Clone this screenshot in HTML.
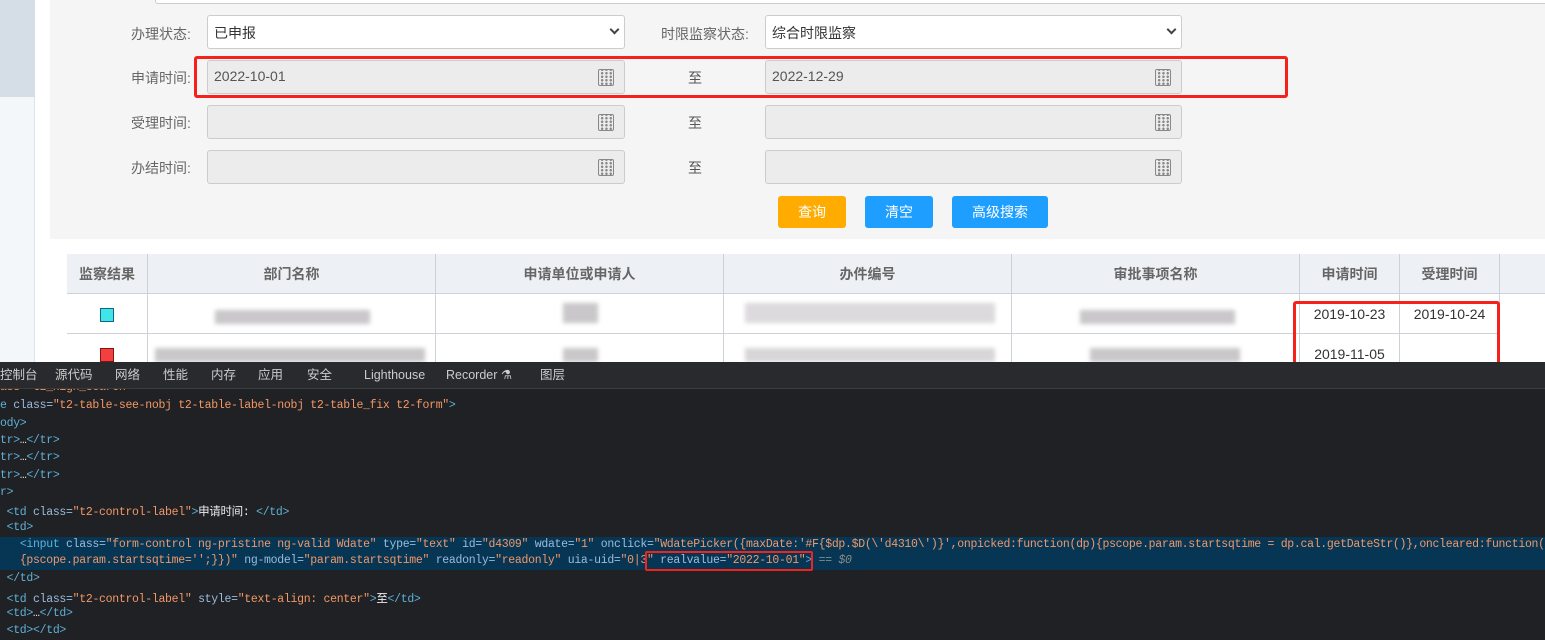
<!DOCTYPE html>
<html><head><meta charset="utf-8"><style>
*{box-sizing:border-box;margin:0;padding:0}
body{width:1545px;height:640px;overflow:hidden;background:#fff;font-family:"Liberation Sans","Noto Sans CJK SC",sans-serif;position:relative}
.a{position:absolute}
.lbl{position:absolute;font-size:14px;color:#666;}
.inp{position:absolute;height:34px;border:1px solid #ccc;border-radius:3px;background:#ececec;font-size:14px;color:#555;padding:7px 6px;}
.sel{background:#fff;}
.cal{position:absolute;right:10px;top:8px;width:16px;height:17px;border:1.5px solid #888;border-radius:2px;background:
radial-gradient(circle,#888 1.2px,transparent 1.3px) 1px 5px/4.3px 3.5px}
.chev{position:absolute;right:6px;top:10px;width:7px;height:7px;border-right:2px solid #444;border-bottom:2px solid #444;transform:rotate(45deg)}
.btn{position:absolute;top:196px;height:32px;border-radius:3px;color:#fff;font-size:14px;text-align:center;line-height:32px}
.th,.td{position:absolute;border-right:1px solid #ccd2d8;border-bottom:1px solid #ccd2d8;font-size:14px;text-align:center}
.th{background:#edf1f5;color:#666;font-weight:bold;line-height:40px;height:40px;top:254px}
.td{color:#333;line-height:40px;height:40px;background:#fff}
.blur{position:absolute;background:#c9c7c9;filter:blur(2px);}
.code{position:absolute;left:0;font-family:"Liberation Mono","Noto Sans CJK SC",monospace;font-size:11.5px;color:#9bbbdc;white-space:pre;letter-spacing:-0.3px}
.t{color:#5db0d7}.v{color:#f29766}.w{color:#e8eaed}
.tab{position:absolute;top:0;line-height:27px;font-size:12.5px;color:#ccc}
</style></head><body>
<div class="a" style="left:0;top:0;width:35px;height:97px;background:#d5dee7"></div>
<div class="a" style="left:0;top:97px;width:35px;height:270px;background:#f3f7fa;border-right:1px solid #dde5ec"></div>
<div class="a" style="left:50px;top:0;width:1495px;height:239px;background:#f5f5f5"></div>
<div class="a" style="left:155px;top:-30px;width:1395px;height:34px;background:#fff;border:1px solid #ccc;border-radius:3px"></div>

<div class="lbl" style="left:131px;top:24px">办理状态:</div>
<div class="inp sel" style="left:207px;top:15px;width:418px;color:#333">已申报<span class="chev"></span></div>
<div class="lbl" style="left:661px;top:24px">时限监察状态:</div>
<div class="inp sel" style="left:765px;top:15px;width:417px;color:#333">综合时限监察<span class="chev"></span></div>

<div class="lbl" style="left:131px;top:68px">申请时间:</div>
<div class="inp" style="left:207px;top:60px;width:418px">2022-10-01<span class="cal"></span></div>
<div class="lbl" style="left:688px;top:68px;color:#555">至</div>
<div class="inp" style="left:765px;top:60px;width:417px">2022-12-29<span class="cal"></span></div>
<div class="a" style="left:194px;top:56px;width:1094px;height:42px;border:3px solid #f5221b;border-radius:3px"></div>

<div class="lbl" style="left:131px;top:113px">受理时间:</div>
<div class="inp" style="left:207px;top:105px;width:418px"><span class="cal"></span></div>
<div class="lbl" style="left:688px;top:113px;color:#555">至</div>
<div class="inp" style="left:765px;top:105px;width:417px"><span class="cal"></span></div>

<div class="lbl" style="left:131px;top:158px">办结时间:</div>
<div class="inp" style="left:207px;top:150px;width:418px"><span class="cal"></span></div>
<div class="lbl" style="left:688px;top:158px;color:#555">至</div>
<div class="inp" style="left:765px;top:150px;width:417px"><span class="cal"></span></div>

<div class="btn" style="left:778px;width:68px;background:#ffab00">查询</div>
<div class="btn" style="left:865px;width:68px;background:#1e9fff">清空</div>
<div class="btn" style="left:952px;width:96px;background:#1e9fff">高级搜索</div>

<div class="a" style="left:67px;top:254px;width:1478px;height:1px;background:#ccd2d8"></div>
<div class="a" style="left:67px;top:254px;width:1px;height:110px;background:#ccd2d8"></div>
<div class="th" style="left:67px;width:81px">监察结果</div>
<div class="th" style="left:148px;width:288px">部门名称</div>
<div class="th" style="left:436px;width:288px">申请单位或申请人</div>
<div class="th" style="left:724px;width:288px">办件编号</div>
<div class="th" style="left:1012px;width:288px">审批事项名称</div>
<div class="th" style="left:1300px;width:100px">申请时间</div>
<div class="th" style="left:1400px;width:100px">受理时间</div>
<div class="th" style="left:1500px;width:45px;border-right:none"></div>

<div class="td" style="left:67px;top:294px;width:81px"></div>
<div class="td" style="left:148px;top:294px;width:288px"></div>
<div class="td" style="left:436px;top:294px;width:288px"></div>
<div class="td" style="left:724px;top:294px;width:288px"></div>
<div class="td" style="left:1012px;top:294px;width:288px"></div>
<div class="td" style="left:1300px;top:294px;width:100px">2019-10-23</div>
<div class="td" style="left:1400px;top:294px;width:100px">2019-10-24</div>
<div class="td" style="left:67px;top:334px;width:81px"></div>
<div class="td" style="left:148px;top:334px;width:288px"></div>
<div class="td" style="left:436px;top:334px;width:288px"></div>
<div class="td" style="left:724px;top:334px;width:288px"></div>
<div class="td" style="left:1012px;top:334px;width:288px"></div>
<div class="td" style="left:1300px;top:334px;width:100px">2019-11-05</div>
<div class="td" style="left:1400px;top:334px;width:100px"></div>
<div class="a" style="left:100px;top:308px;width:14px;height:14px;background:#40e5e8;border:1px solid #168"></div>
<div class="a" style="left:100px;top:348px;width:14px;height:14px;background:#f24040;border:1px solid #811"></div>
<div class="blur" style="left:215px;top:310px;width:155px;height:14px"></div>
<div class="blur" style="left:563px;top:303px;width:35px;height:20px"></div>
<div class="blur" style="left:745px;top:303px;width:250px;height:20px;background:#dcdadc"></div>
<div class="blur" style="left:1080px;top:310px;width:155px;height:14px"></div>
<div class="blur" style="left:155px;top:348px;width:270px;height:14px"></div>
<div class="blur" style="left:563px;top:348px;width:35px;height:14px"></div>
<div class="blur" style="left:745px;top:348px;width:250px;height:14px;background:#d8d6d8"></div>
<div class="blur" style="left:1090px;top:348px;width:150px;height:14px"></div>
<div class="a" style="left:1293px;top:301px;width:207px;height:65px;border:3px solid #f5221b;border-radius:3px"></div>

<div class="a" style="left:0;top:389px;width:1545px;height:251px;background:#202124"></div>
<div class="a" style="left:0;top:537px;width:1545px;height:33px;background:#073655"></div>
<div class="code" style="top:381px"><span class="v">ass="t2_high_search"</span><span class="t">&gt;</span></div>
<div class="code" style="top:399px"><span class="t">e</span> class=<span class="v">"t2-table-see-nobj t2-table-label-nobj t2-table_fix t2-form"</span><span class="t">&gt;</span></div>
<div class="code" style="top:417px"><span class="t">ody&gt;</span></div>
<div class="code" style="top:434px"><span class="t">tr&gt;</span><span class="w">…</span><span class="t">&lt;/tr&gt;</span></div>
<div class="code" style="top:451px"><span class="t">tr&gt;</span><span class="w">…</span><span class="t">&lt;/tr&gt;</span></div>
<div class="code" style="top:469px"><span class="t">tr&gt;</span><span class="w">…</span><span class="t">&lt;/tr&gt;</span></div>
<div class="code" style="top:486px"><span class="t">r&gt;</span></div>
<div class="code" style="top:503px"> <span class="t">&lt;td</span> class=<span class="v">"t2-control-label"</span><span class="t">&gt;</span><span class="w">申请时间: </span><span class="t">&lt;/td&gt;</span></div>
<div class="code" style="top:521px"> <span class="t">&lt;td&gt;</span></div>
<div class="code" style="top:538px">   <span class="t">&lt;input</span> class=<span class="v">"form-control ng-pristine ng-valid Wdate"</span> type=<span class="v">"text"</span> id=<span class="v">"d4309"</span> wdate=<span class="v">"1"</span> onclick=<span class="v">"WdatePicker({maxDate:'#F{$dp.$D(\'d4310\')}',onpicked:function(dp){pscope.param.startsqtime = dp.cal.getDateStr()},oncleared:function()</span></div>
<div class="code" style="top:554px">   <span class="v">{pscope.param.startsqtime='';}})"</span> ng-model=<span class="v">"param.startsqtime"</span> readonly=<span class="v">"readonly"</span> uia-uid=<span class="v">"0|3"</span> realvalue=<span class="v">"2022-10-01"</span><span class="t">&gt;</span> <span style="color:#8a8a8a;font-style:italic">== $0</span></div>
<div class="a" style="left:645px;top:551px;width:168px;height:20px;border:2px solid #f5221b;border-radius:2px"></div>
<div class="code" style="top:572px"> <span class="t">&lt;/td&gt;</span></div>
<div class="code" style="top:590px"> <span class="t">&lt;td</span> class=<span class="v">"t2-control-label"</span> style=<span class="v">"text-align: center"</span><span class="t">&gt;</span><span class="w">至</span><span class="t">&lt;/td&gt;</span></div>
<div class="code" style="top:607px"> <span class="t">&lt;td&gt;</span><span class="w">…</span><span class="t">&lt;/td&gt;</span></div>
<div class="code" style="top:624px"> <span class="t">&lt;td&gt;&lt;/td&gt;</span></div>

<div class="a" style="left:0;top:362px;width:1545px;height:27px;background:#292a2d;border-bottom:1px solid #3c3c3c">
<span class="tab" style="left:0">控制台</span><span class="tab" style="left:55px">源代码</span><span class="tab" style="left:115px">网络</span><span class="tab" style="left:163px">性能</span><span class="tab" style="left:211px">内存</span><span class="tab" style="left:258px">应用</span><span class="tab" style="left:307px">安全</span><span class="tab" style="left:364px">Lighthouse</span><span class="tab" style="left:446px">Recorder ⚗</span><span class="tab" style="left:540px">图层</span>
</div>
</body></html>
